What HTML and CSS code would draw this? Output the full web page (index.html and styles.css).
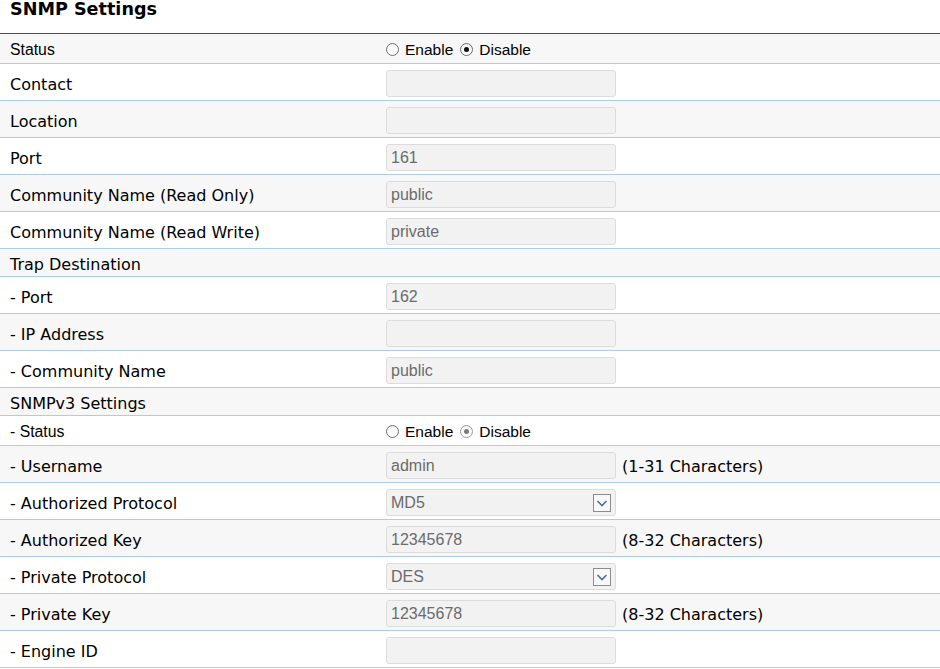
FILE: index.html
```html
<!DOCTYPE html>
<html lang="en">
<head>
    <meta charset="UTF-8">
    <meta name="viewport" content="width=device-width, initial-scale=1.0">
    <title>SNMP Settings</title>
    <link rel="stylesheet" href="styles.css">
</head>
<body>
    <div class="panel">
        <h1 class="title">SNMP Settings</h1>

        <div class="row row-radio alt">
            <div class="label arial">Status</div>
            <div class="value">
                <span class="radio"></span><span class="opt">Enable</span>
                <span class="radio checked"></span><span class="opt">Disable</span>
            </div>
        </div>
        <div class="row">
            <div class="label">Contact</div>
            <div class="value"><input class="field" type="text" value=""></div>
        </div>
        <div class="row alt">
            <div class="label">Location</div>
            <div class="value"><input class="field" type="text" value=""></div>
        </div>
        <div class="row">
            <div class="label">Port</div>
            <div class="value"><input class="field" type="text" value="161"></div>
        </div>
        <div class="row alt">
            <div class="label">Community Name (Read Only)</div>
            <div class="value"><input class="field" type="text" value="public"></div>
        </div>
        <div class="row">
            <div class="label">Community Name (Read Write)</div>
            <div class="value"><input class="field" type="text" value="private"></div>
        </div>

        <div class="row row-head alt">
            <div class="label">Trap Destination</div>
        </div>
        <div class="row">
            <div class="label">- Port</div>
            <div class="value"><input class="field" type="text" value="162"></div>
        </div>
        <div class="row alt">
            <div class="label">- IP Address</div>
            <div class="value"><input class="field" type="text" value=""></div>
        </div>
        <div class="row">
            <div class="label">- Community Name</div>
            <div class="value"><input class="field" type="text" value="public"></div>
        </div>

        <div class="row row-head alt">
            <div class="label">SNMPv3 Settings</div>
        </div>
        <div class="row row-radio">
            <div class="label arial">- Status</div>
            <div class="value">
                <span class="radio"></span><span class="opt">Enable</span>
                <span class="radio checked off"></span><span class="opt">Disable</span>
            </div>
        </div>
        <div class="row alt">
            <div class="label">- Username</div>
            <div class="value">
                <input class="field" type="text" value="admin">
                <span class="hint">(1-31 Characters)</span>
            </div>
        </div>
        <div class="row">
            <div class="label">- Authorized Protocol</div>
            <div class="value">
                <div class="field select">
                    <span>MD5</span>
                    <svg class="arrow" width="18" height="18" viewBox="0 0 18 18">
                        <rect x="0.5" y="0.5" width="17" height="17" fill="#f8f8f8" stroke="#8c8c8c"/>
                        <path d="M4.5 7 L9 11.5 L13.5 7" fill="none" stroke="#4d6f9c" stroke-width="1.6"/>
                    </svg>
                </div>
            </div>
        </div>
        <div class="row alt">
            <div class="label">- Authorized Key</div>
            <div class="value">
                <input class="field" type="text" value="12345678">
                <span class="hint">(8-32 Characters)</span>
            </div>
        </div>
        <div class="row">
            <div class="label">- Private Protocol</div>
            <div class="value">
                <div class="field select">
                    <span>DES</span>
                    <svg class="arrow" width="18" height="18" viewBox="0 0 18 18">
                        <rect x="0.5" y="0.5" width="17" height="17" fill="#f8f8f8" stroke="#8c8c8c"/>
                        <path d="M4.5 7 L9 11.5 L13.5 7" fill="none" stroke="#4d6f9c" stroke-width="1.6"/>
                    </svg>
                </div>
            </div>
        </div>
        <div class="row alt">
            <div class="label">- Private Key</div>
            <div class="value">
                <input class="field" type="text" value="12345678">
                <span class="hint">(8-32 Characters)</span>
            </div>
        </div>
        <div class="row">
            <div class="label">- Engine ID</div>
            <div class="value"><input class="field" type="text" value=""></div>
        </div>
    </div>
</body>
</html>
```

FILE: styles.css
```css
body {
    margin: 0;
    background-color: #fff;
    font-family: "DejaVu Sans", Verdana, sans-serif;
    color: #000;
}
.panel {
    width: 940px;
}
.title {
    margin: 0;
    height: 33px;
    padding-left: 10px;
    font-size: 17.6px;
    line-height: 19px;
    font-weight: bold;
    border-bottom: 1px solid #2452a0;
    box-sizing: content-box;
}
.row {
    display: flex;
    align-items: center;
    height: 36px;
    border-bottom: 1px solid #aecde0;
    font-size: 16px;
}
.row-radio {
    height: 27px;
    padding-top: 2px;
}
.row-head {
    height: 27px;
}
.alt {
    background-color: #f7f7f7;
}
.label {
    flex: none;
    width: 366px;
    padding-left: 10px;
    padding-top: 4px;
}
.row-radio .label {
    padding-top: 0;
}
.arial {
    font-family: "Liberation Sans", Arial, sans-serif;
    font-size: 15.8px;
}
.value {
    display: flex;
    align-items: center;
    padding-left: 10px;
}
.field {
    width: 230px;
    height: 27px;
    margin: 3px 0 0 0;
    padding: 0 4px;
    box-sizing: border-box;
    border: 1px solid #dcdcdc;
    border-radius: 3px;
    background-color: #f2f2f2;
    color: #6b6b6b;
    font-family: "Liberation Sans", Arial, sans-serif;
    font-size: 16px;
    outline: none;
}
.select {
    display: flex;
    align-items: center;
    justify-content: space-between;
    padding-right: 4px;
}
.arrow {
    display: block;
}
.hint {
    margin-left: 6px;
    margin-top: 4px;
}
.radio {
    width: 13px;
    height: 13px;
    box-sizing: border-box;
    border: 1px solid #6e6e6e;
    border-radius: 50%;
    background: linear-gradient(#f4f4f4, #fff);
    display: flex;
    align-items: center;
    justify-content: center;
}
.radio.checked::after {
    content: "";
    width: 5px;
    height: 5px;
    border-radius: 50%;
    background-color: #111;
}
.radio.off {
    border-color: #9a9a9a;
}
.radio.off::after {
    background-color: #7c7c7c;
}
.opt {
    font-family: "Liberation Sans", Arial, sans-serif;
    font-size: 15.5px;
    margin-left: 6px;
    margin-right: 7px;
}
```
